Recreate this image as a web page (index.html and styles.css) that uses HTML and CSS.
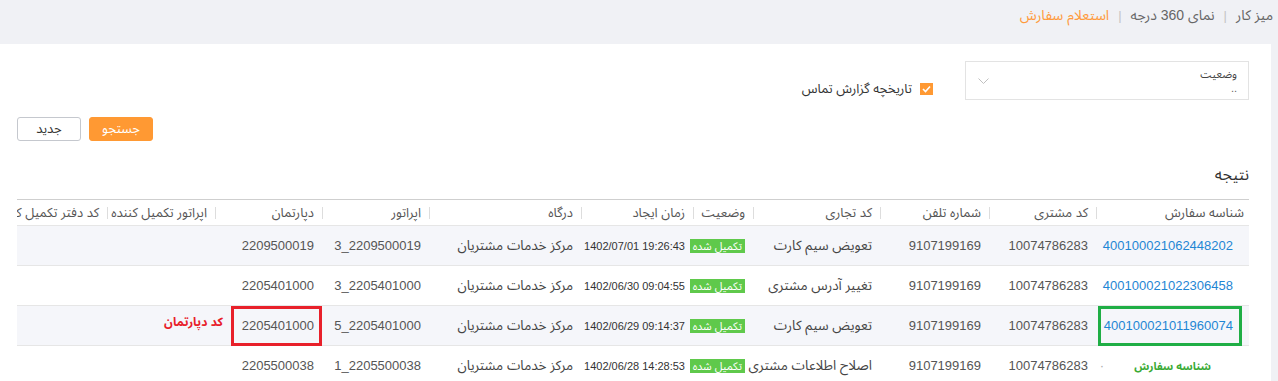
FILE: index.html
```html
<!DOCTYPE html>
<html lang="fa" dir="rtl">
<head>
    <meta charset="UTF-8">
    <meta name="viewport" content="width=device-width, initial-scale=1.0">
    <title>استعلام سفارش</title>
    <link rel="stylesheet" href="styles.css">
</head>
<body>
    <div class="breadcrumb">
        <span>میز کار</span><span class="sep">|</span><span>نمای 360 درجه</span><span class="sep">|</span><span class="current">استعلام سفارش</span>
    </div>

    <div class="panel">
        <div class="filters">
            <div class="select">
                <div class="select-text">
                    <div class="select-label">وضعیت</div>
                    <div class="select-value">..</div>
                </div>
                <svg class="chevron" width="11" height="7" viewBox="0 0 11 7"><polyline points="0.5,0.5 5.5,5.5 10.5,0.5" fill="none" stroke="#c0c0c0" stroke-width="1"/></svg>
            </div>
            <label class="check-item">
                <span class="check"><svg width="9" height="8" viewBox="0 0 9 8"><polyline points="1,4 3.5,6.5 8,1.5" fill="none" stroke="#fff" stroke-width="1.6"/></svg></span>
                <span>تاریخچه گزارش تماس</span>
            </label>
        </div>

        <div class="actions">
            <button class="btn-primary">جستجو</button>
            <button class="btn-default">جدید</button>
        </div>

        <h3 class="result-title">نتیجه</h3>

        <div class="table-wrap">
            <table>
                <colgroup>
                    <col style="width:153px"><col style="width:107px"><col style="width:109px"><col style="width:127px">
                    <col style="width:60px"><col style="width:112px"><col style="width:152px"><col style="width:107px">
                    <col style="width:107px"><col style="width:108px"><col style="width:130px">
                </colgroup>
                <thead>
                    <tr>
                        <th class="first">شناسه سفارش</th>
                        <th>کد مشتری</th>
                        <th>شماره تلفن</th>
                        <th>کد تجاری</th>
                        <th>وضعیت</th>
                        <th>زمان ایجاد</th>
                        <th>درگاه</th>
                        <th>اپراتور</th>
                        <th>دپارتمان</th>
                        <th>اپراتور تکمیل کننده</th>
                        <th>کد دفتر تکمیل کننده</th>
                    </tr>
                </thead>
                <tbody>
                    <tr>
                        <td class="first"><a class="order-link" href="#">400100021062448202</a></td>
                        <td>10074786283</td>
                        <td>9107199169</td>
                        <td class="fa">تعویض سیم کارت</td>
                        <td><span class="badge">تکمیل شده</span></td>
                        <td class="date"><span class="ltr">1402/07/01 19:26:43</span></td>
                        <td class="fa">مرکز خدمات مشتریان</td>
                        <td><span class="ltr">3_2209500019</span></td>
                        <td>2209500019</td>
                        <td></td>
                        <td></td>
                    </tr>
                    <tr>
                        <td class="first"><a class="order-link" href="#">400100021022306458</a></td>
                        <td>10074786283</td>
                        <td>9107199169</td>
                        <td class="fa">تغییر آدرس مشتری</td>
                        <td><span class="badge">تکمیل شده</span></td>
                        <td class="date"><span class="ltr">1402/06/30 09:04:55</span></td>
                        <td class="fa">مرکز خدمات مشتریان</td>
                        <td><span class="ltr">3_2205401000</span></td>
                        <td>2205401000</td>
                        <td></td>
                        <td></td>
                    </tr>
                    <tr>
                        <td class="first marked"><a class="order-link" href="#">400100021011960074</a><span class="box box-green"></span></td>
                        <td>10074786283</td>
                        <td>9107199169</td>
                        <td class="fa">تعویض سیم کارت</td>
                        <td><span class="badge">تکمیل شده</span></td>
                        <td class="date"><span class="ltr">1402/06/29 09:14:37</span></td>
                        <td class="fa">مرکز خدمات مشتریان</td>
                        <td><span class="ltr">5_2205401000</span></td>
                        <td class="marked">2205401000<span class="box box-red"></span></td>
                        <td class="note-cell"><span class="note-red">کد دپارتمان</span></td>
                        <td></td>
                    </tr>
                    <tr>
                        <td class="first note-green-cell"><span class="note-green">شناسه سفارش</span><span class="dot">·</span></td>
                        <td>10074786283</td>
                        <td>9107199169</td>
                        <td class="fa">اصلاح اطلاعات مشتری</td>
                        <td><span class="badge">تکمیل شده</span></td>
                        <td class="date"><span class="ltr">1402/06/28 14:28:53</span></td>
                        <td class="fa">مرکز خدمات مشتریان</td>
                        <td><span class="ltr">1_2205500038</span></td>
                        <td>2205500038</td>
                        <td></td>
                        <td></td>
                    </tr>
                </tbody>
            </table>
        </div>
    </div>
</body>
</html>
```

FILE: styles.css
```css
body { margin: 0; background: #f0f1f5; font-family: "Liberation Sans", "Noto Sans Arabic", "DejaVu Sans", sans-serif; color: #555; line-height: 1.2; }

.breadcrumb { height: 44px; line-height: 30px; padding-right: 5px; font-size: 14px; color: #666; }
.breadcrumb .sep { color: #c4c4c4; margin: 0 9px; font-size: 13px; }
.breadcrumb .current { color: #ff9a3c; }

.panel { background: #fff; margin-right: 7px; padding: 17px 22px 0 17px; height: 320px; overflow: hidden; }

.filters { display: flex; align-items: flex-start; gap: 32px; height: 39px; }
.select { width: 284px; height: 39px; box-sizing: border-box; border: 1px solid #e3e3e3; display: flex; justify-content: space-between; padding: 0 11px 0 12px; }
.select-text { padding-top: 5px; font-size: 11px; line-height: 14px; color: #444; }
.select-value { color: #666; }
.chevron { align-self: center; margin-top: 2px; }

.check-item { margin-top: 20px; display: flex; align-items: center; gap: 8px; font-size: 13px; line-height: 16px; color: #333; }
.check { width: 13px; height: 12px; background: #ff9933; display: flex; align-items: center; justify-content: center; }

.actions { display: flex; justify-content: flex-end; gap: 8px; margin-top: 17px; }
.actions button { width: 64px; height: 24px; font-family: inherit; font-size: 13px; line-height: 16px; border-radius: 3px; padding: 0; cursor: pointer; }
.btn-primary { background: #ff9933; color: #fff; border: 1px solid #ff9933; }
.btn-default { background: #fff; color: #333; border: 1px solid #c5c8ce; }

.result-title { font-size: 16px; line-height: 20px; font-weight: normal; color: #333; margin: 24px 0 14px; }

.table-wrap { overflow: hidden; }
table { border-collapse: collapse; table-layout: fixed; width: 1272px; }
th { height: 25px; border-top: 1px solid #cfcfcf; border-bottom: 1px solid #e6e6e6; padding: 0 8px; font-size: 13px; line-height: 16px; font-weight: normal; color: #555; text-align: right; white-space: nowrap; overflow: hidden; position: relative; }
th::after { content: ""; position: absolute; left: 0; top: 7px; width: 1px; height: 12px; background: #ddd; }
th.first { padding-right: 5px; }

td { height: 39px; border-bottom: 1px solid #e6e6e6; padding: 0 8px; font-size: 13px; line-height: 16px; color: #555; text-align: right; white-space: nowrap; }
tbody tr:nth-child(odd) td { background: #f5f6fa; }
td.first { padding-right: 16px; }
td.fa { color: #444; font-size: 13.5px; }
td.date { font-size: 11px; color: #333; }
.ltr { direction: ltr; unicode-bidi: isolate; }

.order-link { color: #1f86d4; text-decoration: none; }
.badge { display: inline-block; background: #5fc94b; color: #fff; font-size: 11px; line-height: 14px; padding: 0 3px; }

td.marked { position: relative; }
.box { position: absolute; top: 0; bottom: -1px; box-sizing: border-box; border: 3px solid; }
.box-green { border-color: #1fae45; right: 7px; left: 2px; }
.box-red { border-color: #e8202a; right: 0; left: 16px; }

td.note-cell { padding-right: 0; }
.note-red { color: #e8202a; font-weight: bold; font-size: 12px; margin-right: -8px; position: relative; top: -4px; }

td.note-green-cell { padding-right: 38px; }
.note-green { color: #3aaa35; font-weight: bold; font-size: 11px; }
.dot { color: #aaa; margin-right: 30px; }
```
